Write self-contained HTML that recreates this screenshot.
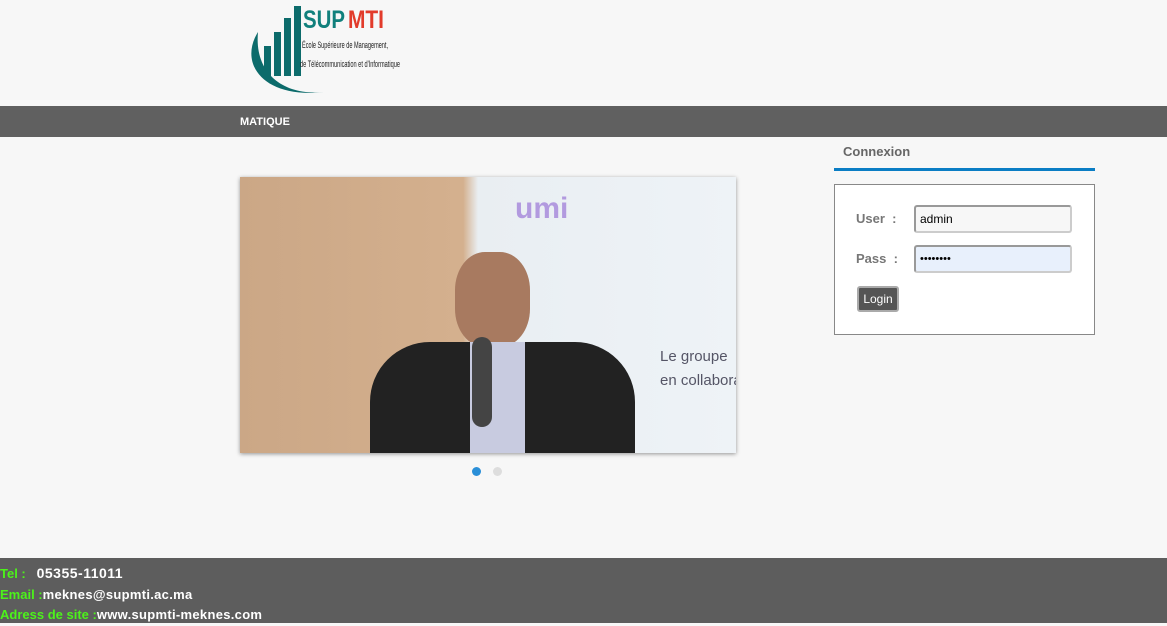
<!DOCTYPE html>
<html><head><meta charset="utf-8"><style>
body{margin:0;width:1167px;height:623px;background:#f7f7f7;font-family:"Liberation Sans",sans-serif;position:relative;overflow:hidden}
.abs{position:absolute}
</style></head><body>
<svg class="abs" style="left:244px;top:4px" width="160" height="94" viewBox="0 0 160 94">
<path d="M14 28 C-6 60 20 95 80 88 C40 92 10 70 14 28Z" fill="#0c6b6b"/>
<rect x="20" y="42" width="7" height="30" fill="#0c6b6b"/>
<rect x="30" y="28" width="7" height="44" fill="#0c6b6b"/>
<rect x="40" y="14" width="7" height="58" fill="#0c6b6b"/>
<rect x="50" y="2" width="7" height="70" fill="#0c6b6b"/>
<text x="59" y="24" font-family="Liberation Sans" font-weight="bold" font-size="25" fill="#11807c" textLength="42" lengthAdjust="spacingAndGlyphs">SUP</text>
<text x="104" y="24" font-family="Liberation Sans" font-weight="bold" font-size="25" fill="#e23b2b" textLength="36" lengthAdjust="spacingAndGlyphs">MTI</text>
<text x="58" y="44" font-family="Liberation Sans" font-size="9" fill="#222" textLength="86" lengthAdjust="spacingAndGlyphs">École Supérieure de Management,</text>
<text x="56" y="63" font-family="Liberation Sans" font-size="9" fill="#222" textLength="100" lengthAdjust="spacingAndGlyphs">de Télécommunication et d'Informatique</text>
</svg>
<div class="abs" style="left:0;top:106px;width:1167px;height:31px;background:#606060"></div>
<div class="abs" style="left:240px;top:116px;color:#fff;font-weight:bold;font-size:11px">MATIQUE</div>
<div class="abs" style="left:240px;top:177px;width:496px;height:276px;overflow:hidden;box-shadow:0 1px 4px rgba(0,0,0,.4);background:linear-gradient(90deg,#cba786 0%,#d4b08e 45%,#e9eef2 48%,#eef3f7 100%)">
 <div class="abs" style="left:420px;top:168px;color:#556;font-size:15px;line-height:24px;white-space:nowrap">Le groupe<br>en collaborat</div>
 <div class="abs" style="left:275px;top:15px;color:#b29adf;font-size:30px;font-weight:bold">umi</div>
 <div class="abs" style="left:215px;top:75px;width:75px;height:95px;border-radius:40%;background:#a87a60"></div>
 <div class="abs" style="left:130px;top:165px;width:265px;height:140px;border-radius:60px 60px 0 0;background:#222"></div>
 <div class="abs" style="left:230px;top:165px;width:55px;height:120px;background:#c8cbe0"></div>
 <div class="abs" style="left:232px;top:160px;width:20px;height:90px;background:#444;border-radius:10px"></div>
</div>
<div class="abs" style="left:472px;top:467px;width:9px;height:9px;border-radius:50%;background:#2a8fd8"></div>
<div class="abs" style="left:493px;top:467px;width:9px;height:9px;border-radius:50%;background:#ddd"></div>
<div class="abs" style="left:843px;top:144px;color:#666;font-weight:bold;font-size:13px">Connexion</div>
<div class="abs" style="left:834px;top:168px;width:261px;height:3px;background:#0a7dc4"></div>
<div class="abs" style="left:834px;top:184px;width:259px;height:149px;border:1px solid #888;background:#fff"></div>
<div class="abs" style="left:856px;top:211px;color:#777;font-weight:bold;font-size:13px">User &nbsp;:</div>
<div class="abs" style="left:856px;top:251px;color:#777;font-weight:bold;font-size:13px">Pass &nbsp;:</div>
<div class="abs" style="left:914px;top:205px;height:24px;border:2px solid #ccc;border-top-color:#999;border-left-color:#999;border-radius:3px;background:#f7f7f7;font-size:12px;line-height:24px;padding-left:4px;width:150px">admin</div>
<div class="abs" style="left:914px;top:245px;height:24px;border:2px solid #ccc;border-top-color:#999;border-left-color:#999;border-radius:3px;background:#e8f0fc;font-size:11px;line-height:24px;padding-left:4px;width:150px">••••••••</div>
<div class="abs" style="left:857px;top:286px;width:42px;height:26px;background:#555;border:2px solid #aaa;border-radius:3px;color:#fff;font-size:12px;line-height:22px;text-align:center;box-sizing:border-box">Login</div>
<div class="abs" style="left:0;top:558px;width:1167px;height:65px;background:#5d5d5d;font-weight:bold;font-size:13px;line-height:20.5px;padding-top:5px;box-sizing:border-box">
<div><span style="color:#4cf31a">Tel : &nbsp;</span> <span style="color:#fff;font-size:14px;letter-spacing:.5px">05355-11011</span></div>
<div><span style="color:#4cf31a">Email :</span><span style="color:#fff;letter-spacing:.3px">meknes@supmti.ac.ma</span></div>
<div><span style="color:#4cf31a">Adress de site :</span><span style="color:#fff;letter-spacing:.3px">www.supmti-meknes.com</span></div>
</div>
</body></html>
